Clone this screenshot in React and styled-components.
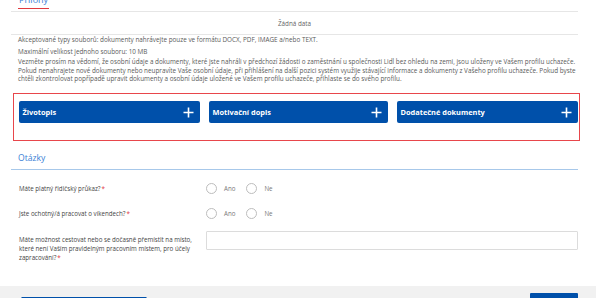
import React from "react";
import styled, { createGlobalStyle } from "styled-components";

const Global = createGlobalStyle`
  html, body { margin: 0; padding: 0; background: #fff; }
  body { font-family: "Open Sans", "Noto Sans", sans-serif; color: #555; overflow: hidden; }
  * { box-sizing: border-box; }
`;

const Page = styled.div`
  width: 596px;
  height: 298px;
  overflow: hidden;
  display: flex;
  flex-direction: column;
`;

const Section = styled.section`
  margin: 0 18px 0 11px;
`;

const TabBar = styled.div`
  height: 18px;
  margin-top: -6px;
  padding-left: 7px;
  border-bottom: 1px solid #e6e6e6;
  display: flex;
  align-items: flex-start;
`;

const Tab = styled.div`
  font-size: 9px;
  line-height: 11px;
  color: #3a7fd6;
  padding: 0 1px;
  border-bottom: 1.5px solid #e0393e;
  height: 15px;
`;

const Empty = styled.div`
  height: 23px;
  border-bottom: 1px solid #e6e6e6;
  display: flex;
  align-items: center;
  justify-content: center;
  font-size: 6.3px;
  color: #666;
`;

const Info = styled.div`
  padding: 1px 0 0 7px;
  font-size: 6.35px;
  line-height: 8.6px;
  color: #5a5a5a;
`;

const P = styled.p`
  margin: 0 0 ${(p) => p.$gap || 0}px;
`;

const UploadBox = styled.div`
  margin: 9px 16px 0 13px;
  border: 1.5px solid #e8464b;
  padding: 7.5px 1.5px 16.5px 4.5px;
  display: grid;
  grid-template-columns: 181px 179px 181px;
  justify-content: space-between;
`;

const UploadButton = styled.button`
  height: 22px;
  border: none;
  border-radius: 2px;
  background: #0050aa;
  color: #fff;
  font-family: "Open Sans", "Noto Sans", sans-serif;
  font-weight: 700;
  font-size: 7.4px;
  display: flex;
  align-items: center;
  justify-content: space-between;
  padding: 0 6px 0 4px;
  cursor: pointer;
`;

const Plus = () => (
  <svg width="11" height="11" viewBox="0 0 11 11">
    <path d="M5.5 0.5v10M0.5 5.5h10" stroke="#fff" strokeWidth="1.6" />
  </svg>
);

const QHeader = styled.div`
  height: 29px;
  padding: 11px 0 0 7px;
  border-bottom: 1.5px solid #a7c8ea;
  font-size: 8.6px;
  color: #3a7fd6;
  line-height: 12px;
`;

const Questions = styled.div`
  padding: 6.5px 0 0 8px;
  display: flex;
  flex-direction: column;
`;

const Row = styled.div`
  display: grid;
  grid-template-columns: 187px 1fr;
  align-items: ${(p) => (p.$top ? "start" : "center")};
  height: ${(p) => p.$h}px;
`;

const Label = styled.div`
  font-size: 6.2px;
  line-height: 9px;
  color: #444;
  padding-right: 6px;
  padding-top: ${(p) => p.$pt || 0}px;
`;

const Req = styled.span`
  color: #e0393e;
  margin-left: 1px;
`;

const Radios = styled.div`
  display: flex;
  align-items: center;
`;

const RadioOpt = styled.label`
  display: flex;
  align-items: center;
  gap: 7px;
  font-size: 6.2px;
  color: #777;
  margin-right: ${(p) => p.$mr || 0}px;
`;

const Circle = styled.span`
  width: 11px;
  height: 11px;
  border-radius: 50%;
  border: 1px solid #bdbdbd;
  background: #fff;
`;

const Input = styled.div`
  margin-top: 4.5px;
  height: 19px;
  border: 1px solid #dcdcdc;
  border-radius: 1px;
  background: #fff;
`;

const Footer = styled.div`
  margin-top: auto;
  height: 12px;
  background: #f1f1f1;
  padding: 11px 18px 0 21px;
  display: flex;
  justify-content: space-between;
  align-items: flex-start;
  overflow: visible;
`;

const Outline = styled.button`
  height: 14px;
  width: 126px;
  flex: none;
  border: 1px solid #0050aa;
  background: #fff;
  color: #0050aa;
  font-family: "Open Sans", "Noto Sans", sans-serif;
  font-weight: 700;
  font-size: 7px;
  display: flex;
  align-items: flex-start;
  gap: 5px;
  padding: 2px 0 0 8px;
  border-radius: 1px;
  text-decoration: underline;
`;

const Primary = styled.button`
  height: 14px;
  width: 48px;
  flex: none;
  margin-top: -4px;
  border: none;
  background: #0050aa;
  color: #fff;
  font-family: "Open Sans", "Noto Sans", sans-serif;
  font-weight: 700;
  font-size: 6.5px;
  padding: 3px 0 0;
  border-radius: 1px;
  display: flex;
  justify-content: center;
  align-items: flex-start;
`;

const Pencil = () => (
  <svg width="8" height="8" viewBox="0 0 8 8">
    <path d="M1 7l1-3 3.5-3.5 2 2L4 6z" fill="none" stroke="#0050aa" strokeWidth="1" />
  </svg>
);

export default function App() {
  return (
    <Page>
      <Global />
      <Section>
        <TabBar>
          <Tab>Přílohy</Tab>
        </TabBar>
        <Empty>Žádná data</Empty>
        <Info>
          <P $gap={3.4}>
            Akceptované typy souborů: dokumenty nahrávejte pouze ve formátu DOCX, PDF, IMAGE a/nebo TEXT.
          </P>
          <P $gap={1.4}>Maximální velikost jednoho souboru: 10 MB</P>
          <P>
            Vezměte prosím na vědomí, že osobní údaje a dokumenty, které jste nahráli v předchozí žádosti o zaměstnání u
            společnosti Lidl bez ohledu na zemi, jsou uloženy ve Vašem profilu uchazeče. Pokud nenahrajete nové
            dokumenty nebo neupravíte Vaše osobní údaje, při přihlášení na další pozici systém využije stávající
            informace a dokumenty z Vašeho profilu uchazeče. Pokud byste chtěli zkontrolovat popřípadě upravit dokumenty
            a osobní údaje uložené ve Vašem profilu uchazeče, přihlaste se do svého profilu.
          </P>
        </Info>
      </Section>
      <UploadBox>
        <UploadButton>
          Životopis <Plus />
        </UploadButton>
        <UploadButton>
          Motivační dopis <Plus />
        </UploadButton>
        <UploadButton>
          Dodatečné dokumenty <Plus />
        </UploadButton>
      </UploadBox>
      <Section>
        <QHeader>Otázky</QHeader>
        <Questions>
          <Row $h={25}>
            <Label>
              Máte platný řidičský průkaz?<Req>*</Req>
            </Label>
            <Radios>
              <RadioOpt $mr={11}>
                <Circle />
                Ano
              </RadioOpt>
              <RadioOpt>
                <Circle />
                Ne
              </RadioOpt>
            </Radios>
          </Row>
          <Row $h={25}>
            <Label>
              Jste ochotný/á pracovat o víkendech?<Req>*</Req>
            </Label>
            <Radios>
              <RadioOpt $mr={11}>
                <Circle />
                Ano
              </RadioOpt>
              <RadioOpt>
                <Circle />
                Ne
              </RadioOpt>
            </Radios>
          </Row>
          <Row $h={40} $top>
            <Label $pt={9}>
              Máte možnost cestovat nebo se dočasně přemístit na místo, které není Vaším pravidelným pracovním místem,
              pro účely zapracování?<Req>*</Req>
            </Label>
            <Input />
          </Row>
        </Questions>
      </Section>
      <Footer>
        <Outline>
          <Pencil />
          Najít jinou pracovní příležitost
        </Outline>
        <Primary>Přihlásit se</Primary>
      </Footer>
    </Page>
  );
}
